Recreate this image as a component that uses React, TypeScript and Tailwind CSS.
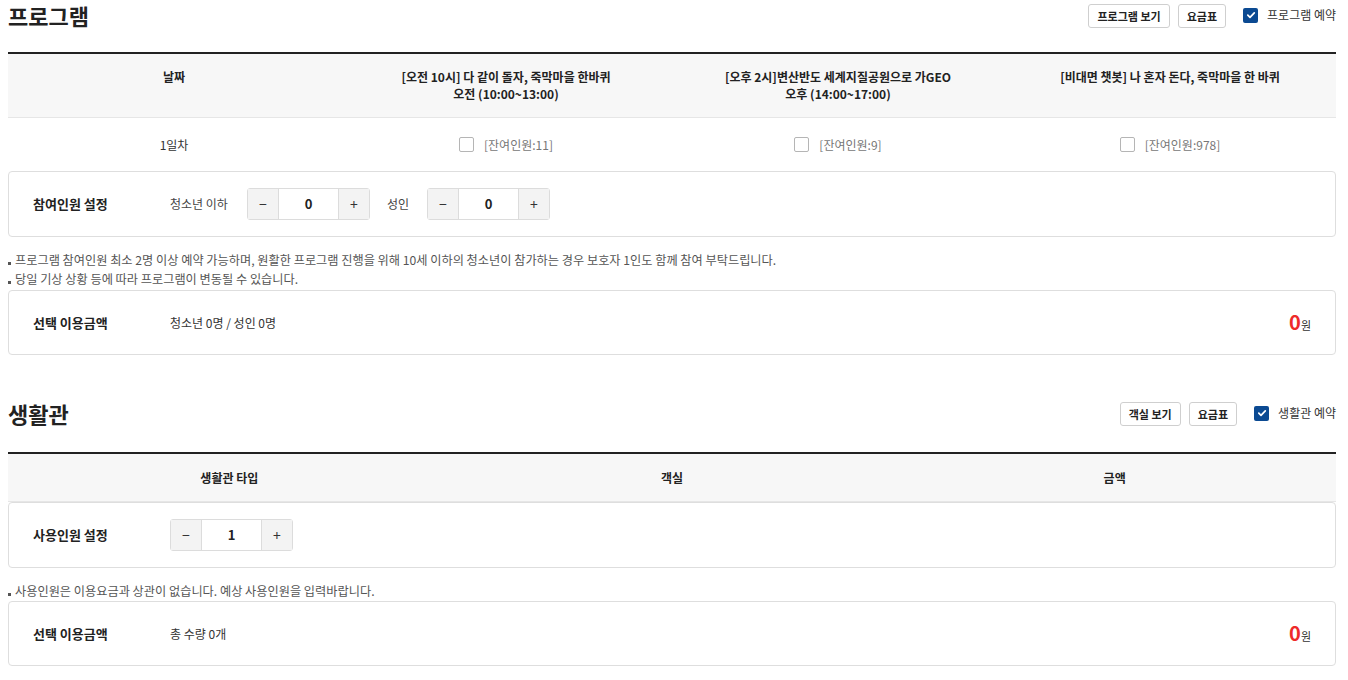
import React from "react";

const font = { fontFamily: '"Noto Sans CJK KR", "Noto Sans", sans-serif' };

function CheckedBox() {
  return (
    <span className="inline-flex h-[15px] w-[15px] items-center justify-center rounded-[2px] bg-[#0b4a92]">
      <svg width="10" height="10" viewBox="0 0 10 10">
        <path d="M1.8 5.2 L4 7.3 L8.3 2.8" fill="none" stroke="#fff" strokeWidth="1.7" strokeLinecap="round" strokeLinejoin="round" />
      </svg>
    </span>
  );
}

function EmptyBox() {
  return <span className="inline-block h-[15px] w-[15px] rounded-[2px] border border-[#b5b5b5] bg-white" />;
}

function Stepper({ value }: { value: number }) {
  return (
    <div className="flex h-[32px] w-[123px] rounded-[3px] border border-[#dcdcdc]">
      <button className="flex w-[31px] items-center justify-center border-r border-[#dcdcdc] bg-[#f3f3f3] text-[14px] text-[#333]">−</button>
      <div className="flex flex-1 items-center justify-center text-[13px] font-bold text-[#222]">{value}</div>
      <button className="flex w-[31px] items-center justify-center border-l border-[#dcdcdc] bg-[#f3f3f3] text-[14px] text-[#333]">+</button>
    </div>
  );
}

function Btn({ children }: { children: React.ReactNode }) {
  return (
    <button className="h-[24px] rounded-[3px] border border-[#cfcfcf] bg-white px-[8px] text-[11px] font-bold text-[#222]">
      {children}
    </button>
  );
}

function SectionHead({ title, btns, check }: { title: string; btns: string[]; check: string }) {
  return (
    <div className="flex h-[30px] items-center justify-between">
      <h2 className="text-[22px] font-bold leading-[30px] text-[#222]">{title}</h2>
      <div className="flex items-center">
        {btns.map((b, i) => (
          <span key={i} className="ml-[8px]">
            <Btn>{b}</Btn>
          </span>
        ))}
        <span className="ml-[17px] flex items-center gap-[9px]">
          <CheckedBox />
          <span className="text-[12px] text-[#333]">{check}</span>
        </span>
      </div>
    </div>
  );
}

function Price({ label, info }: { label: string; info: string }) {
  return (
    <div className="flex h-[65px] items-center rounded-[4px] border border-[#dedede] px-[24px]">
      <div className="w-[137px] text-[13px] font-bold text-[#222]">{label}</div>
      <div className="flex-1 text-[12px] text-[#333]">{info}</div>
      <div className="flex items-baseline">
        <span className="text-[20px] font-bold leading-none text-[#ee2a2a]">0</span>
        <span className="text-[11px] text-[#333]">원</span>
      </div>
    </div>
  );
}

function Note({ children }: { children: React.ReactNode }) {
  return (
    <div className="flex h-[19px] items-center text-[12.2px] text-[#555]">
      <span className="mr-[4px] mt-[5px] inline-block h-[3px] w-[3px] bg-[#555]" />
      {children}
    </div>
  );
}

export default function App() {
  return (
    <div className="min-h-[680px] bg-white pl-[8px] pr-[12px]" style={font}>
      <SectionHead title="프로그램" btns={["프로그램 보기", "요금표"]} check="프로그램 예약" />
      <div className="mt-[22px] border-t-2 border-[#222]">
        <div className="grid h-[64px] grid-cols-4 items-start border-b border-[#e6e6e6] bg-[#f7f7f7] pt-[14px] text-center text-[12px] font-semibold leading-[17px] text-[#222]">
          <div>날짜</div>
          <div>
            [오전 10시] 다 같이 돌자, 죽막마을 한바퀴
            <br />
            오전 (10:00~13:00)
          </div>
          <div>
            [오후 2시]변산반도 세계지질공원으로 가GEO
            <br />
            오후 (14:00~17:00)
          </div>
          <div>[비대면 챗봇] 나 혼자 돈다, 죽막마을 한 바퀴</div>
        </div>
        <div className="grid h-[53px] grid-cols-4 items-center text-center text-[12px] text-[#333]">
          <div>1일차</div>
          {["11", "9", "978"].map((n) => (
            <div key={n} className="flex items-center justify-center gap-[10px]">
              <EmptyBox />
              <span className="text-[#777]">[잔여인원:{n}]</span>
            </div>
          ))}
        </div>
      </div>
      <div className="flex h-[66px] items-center rounded-[4px] border border-[#dedede] px-[24px]">
        <div className="w-[137px] text-[13px] font-bold text-[#222]">참여인원 설정</div>
        <span className="w-[77px] text-[12px] text-[#444]">청소년 이하</span>
        <Stepper value={0} />
        <span className="ml-[17px] w-[40px] text-[12px] text-[#444]">성인</span>
        <Stepper value={0} />
      </div>
      <div className="mt-[14px] mb-[1px]">
        <Note>프로그램 참여인원 최소 2명 이상 예약 가능하며, 원활한 프로그램 진행을 위해 10세 이하의 청소년이 참가하는 경우 보호자 1인도 함께 참여 부탁드립니다.</Note>
        <Note>당일 기상 상황 등에 따라 프로그램이 변동될 수 있습니다.</Note>
      </div>
      <Price label="선택 이용금액" info="청소년 0명 / 성인 0명" />

      <div className="mt-[43px]">
        <SectionHead title="생활관" btns={["객실 보기", "요금표"]} check="생활관 예약" />
      </div>
      <div className="mt-[24px] border-t-2 border-[#222]">
        <div className="grid h-[48px] grid-cols-3 items-center border-b border-[#e6e6e6] bg-[#f7f7f7] text-center text-[12px] font-semibold text-[#222]">
          <div>생활관 타입</div>
          <div>객실</div>
          <div>금액</div>
        </div>
      </div>
      <div className="flex h-[66px] items-center rounded-[4px] border border-[#dedede] px-[24px]">
        <div className="w-[137px] text-[13px] font-bold text-[#222]">사용인원 설정</div>
        <Stepper value={1} />
      </div>
      <div className="mt-[14px] mb-[0px]">
        <Note>사용인원은 이용요금과 상관이 없습니다. 예상 사용인원을 입력바랍니다.</Note>
      </div>
      <Price label="선택 이용금액" info="총 수량 0개" />
    </div>
  );
}
